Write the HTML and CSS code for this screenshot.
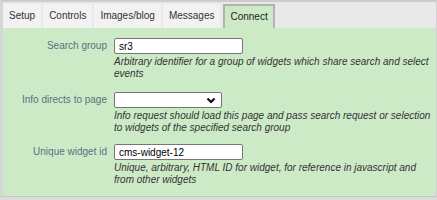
FILE: index.html
```html
<!DOCTYPE html>
<html lang="en">
<head>
    <meta charset="UTF-8">
    <meta name="viewport" content="width=device-width, initial-scale=1.0">
    <title>Widget settings</title>
    <link rel="stylesheet" href="styles.css">
</head>
<body>
    <div class="tab-box">
        <div class="tab-bar">
            <div class="tab">Setup</div>
            <div class="tab">Controls</div>
            <div class="tab">Images/blog</div>
            <div class="tab">Messages</div>
            <div class="tab active">Connect</div>
        </div>

        <div class="tab-panel">
            <div class="form-row">
                <label class="form-label" for="search-group">Search group</label>
                <div class="form-field">
                    <input class="text-input" id="search-group" type="text" value="sr3">
                    <div class="hint">Arbitrary identifier for a group of widgets which share search and select events</div>
                </div>
            </div>

            <div class="form-row">
                <label class="form-label" for="info-page">Info directs to page</label>
                <div class="form-field">
                    <div class="select-wrap">
                        <select class="select-input" id="info-page">
                            <option></option>
                        </select>
                        <svg class="select-arrow" width="10" height="7" viewBox="0 0 10 7">
                            <path d="M1.5 1.5 L5 5 L8.5 1.5" fill="none" stroke="#111" stroke-width="2.2"/>
                        </svg>
                    </div>
                    <div class="hint">Info request should load this page and pass search request or selection to widgets of the specified search group</div>
                </div>
            </div>

            <div class="form-row">
                <label class="form-label" for="widget-id">Unique widget id</label>
                <div class="form-field">
                    <input class="text-input" id="widget-id" type="text" value="cms-widget-12">
                    <div class="hint">Unique, arbitrary, HTML ID for widget, for reference in javascript and from other widgets</div>
                </div>
            </div>
        </div>
    </div>
</body>
</html>
```

FILE: styles.css
```css
body {
    margin: 0;
    background-color: #dcdcdc;
    font-family: "Liberation Sans", Arial, sans-serif;
    font-size: 10px;
}

.tab-box {
    border-top: 2px solid #cccccc;
    border-left: 3px solid #d6d6d6;
    border-right: 1px solid #d2d2d2;
    border-bottom: 1px solid #c4c4c4;
    background-color: #e9e9e9;
}

.tab-bar {
    display: flex;
    gap: 2px;
    padding-top: 2px;
}

.tab {
    height: 24px;
    line-height: 24px;
    padding: 0 6px;
    background-color: #f2f2f2;
    color: #333;
}

.tab.active {
    height: 22px;
    line-height: 22px;
    padding: 0 5px;
    margin-left: 1px;
    background-color: #cdeac7;
    border: 2px solid #b2b2b2;
    border-bottom: none;
    color: #222;
}

.tab-panel {
    background-color: #cdeac7;
    padding: 10px 2px 10px 0;
}

.form-row {
    display: grid;
    grid-template-columns: 104px 1fr;
    column-gap: 7px;
    margin-bottom: 12px;
}

.form-row:nth-child(2) {
    margin-bottom: 10px;
}

.form-row:last-child {
    margin-bottom: 0;
}

.form-label {
    text-align: right;
    line-height: 16px;
    color: #5e6f82;
}

.text-input,
.select-input {
    box-sizing: border-box;
    height: 16px;
    border: 1px solid #767676;
    border-radius: 2px;
    background-color: #fff;
    font-family: inherit;
    font-size: 10px;
    color: #000;
    margin: 0;
    display: block;
}

.text-input {
    width: 129px;
    padding: 0 4px;
}

.select-wrap {
    position: relative;
    width: 108px;
}

.select-input {
    width: 108px;
    appearance: none;
    -webkit-appearance: none;
    padding: 0 4px;
}

.select-arrow {
    position: absolute;
    right: 6px;
    top: 5px;
}

.hint {
    margin-top: 2px;
    line-height: 12px;
    font-style: italic;
    color: #333;
}
```
